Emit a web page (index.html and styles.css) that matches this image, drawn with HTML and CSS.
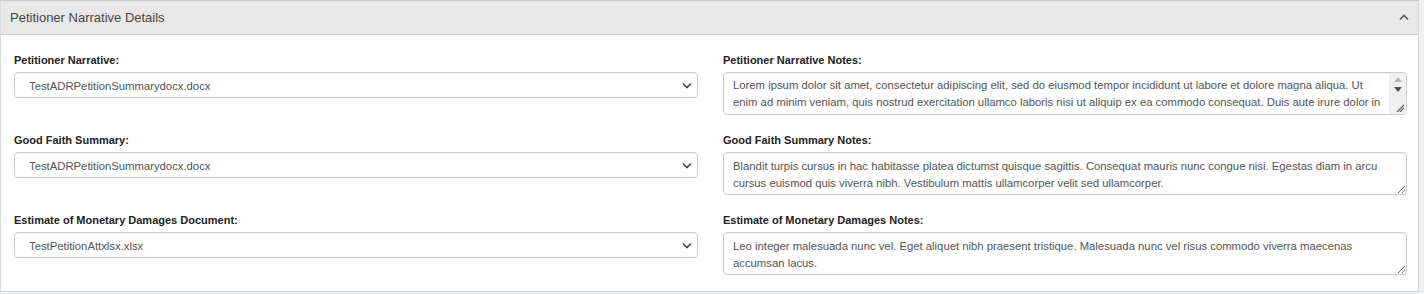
FILE: index.html
```html
<!DOCTYPE html>
<html lang="en">
<head>
  <meta charset="UTF-8">
  <meta name="viewport" content="width=device-width, initial-scale=1.0">
  <title>Petitioner Narrative Details</title>
  <link rel="stylesheet" href="styles.css">
</head>
<body>
  <div class="panel">
    <!-- Cabeçalho do painel -->
    <div class="panel-heading">
      <span class="panel-title">Petitioner Narrative Details</span>
      <svg class="collapse-icon" width="10" height="7" viewBox="0 0 10 7">
        <path d="M1 5.5 L5 1.5 L9 5.5" fill="none" stroke="#555" stroke-width="1.6"/>
      </svg>
    </div>

    <div class="panel-body">
      <div class="field">
        <label for="narrative">Petitioner Narrative:</label>
        <select id="narrative" class="form-control">
          <option>TestADRPetitionSummarydocx.docx</option>
        </select>
      </div>
      <div class="field">
        <label for="narrativeNotes">Petitioner Narrative Notes:</label>
        <div class="scroll-wrap">
          <textarea id="narrativeNotes" class="form-control scroll">Lorem ipsum dolor sit amet, consectetur adipiscing elit, sed do eiusmod tempor incididunt ut labore et dolore magna aliqua. Ut enim ad minim veniam, quis nostrud exercitation ullamco laboris nisi ut aliquip ex ea commodo consequat. Duis aute irure dolor in reprehenderit in voluptate velit esse cillum dolore eu fugiat nulla pariatur. Excepteur sint occaecat cupidatat non proident, sunt in culpa qui officia deserunt mollit anim id est laborum.</textarea>
          <!-- Barra de rolagem desenhada -->
          <div class="fake-scrollbar">
            <svg width="8" height="5" viewBox="0 0 8 5"><path d="M0 5 L4 0 L8 5 Z" fill="#b5b5b5"/></svg>
            <svg width="8" height="5" viewBox="0 0 8 5"><path d="M0 0 L8 0 L4 5 Z" fill="#505050"/></svg>
            <svg class="grip" width="8" height="8" viewBox="0 0 8 8"><path d="M1 8 L8 1 M4 8 L8 4" stroke="#555" stroke-width="1.2"/></svg>
          </div>
        </div>
      </div>

      <div class="field">
        <label for="goodFaith">Good Faith Summary:</label>
        <select id="goodFaith" class="form-control">
          <option>TestADRPetitionSummarydocx.docx</option>
        </select>
      </div>
      <div class="field">
        <label for="goodFaithNotes">Good Faith Summary Notes:</label>
        <textarea id="goodFaithNotes" class="form-control">Blandit turpis cursus in hac habitasse platea dictumst quisque sagittis. Consequat mauris nunc congue nisi. Egestas diam in arcu cursus euismod quis viverra nibh. Vestibulum mattis ullamcorper velit sed ullamcorper.</textarea>
      </div>

      <div class="field">
        <label for="damages">Estimate of Monetary Damages Document:</label>
        <select id="damages" class="form-control">
          <option>TestPetitionAttxlsx.xlsx</option>
        </select>
      </div>
      <div class="field">
        <label for="damagesNotes">Estimate of Monetary Damages Notes:</label>
        <textarea id="damagesNotes" class="form-control">Leo integer malesuada nunc vel. Eget aliquet nibh praesent tristique. Malesuada nunc vel risus commodo viverra maecenas accumsan lacus.</textarea>
      </div>
    </div>
  </div>
</body>
</html>
```

FILE: styles.css
```css
* {
  box-sizing: border-box;
  margin: 0;
  padding: 0;
  font-family: "Liberation Sans", Arial, sans-serif;
}

body {
  background-color: #eef1f4;
  color: #333;
  height: 294px;
}

/* Painel */
.panel {
  width: 1419px;
  background-color: #fff;
  border: 1px solid #d9d9d9;
  border-top-color: #c8c8c8;
}

.panel-heading {
  height: 34px;
  background-color: #e8e8e8;
  border-bottom: 1px solid #d4d4d4;
  padding: 0 10px 0 9px;
  display: flex;
  align-items: center;
  justify-content: space-between;
}

.panel-title {
  font-size: 13px;
  color: #454545;
}

.collapse-icon {
  margin-right: -1px;
}

.panel-body {
  display: grid;
  grid-template-columns: 684px 684px;
  column-gap: 25px;
  row-gap: 17px;
  align-items: start;
  padding: 17px 10px 16px 13px;
}

.field label {
  display: block;
  font-size: 11px;
  font-weight: bold;
  color: #222;
  line-height: 16px;
  margin-bottom: 4px;
}

/* Campos */
.form-control {
  display: block;
  width: 100%;
  font-size: 11.3px;
  color: #555;
  background-color: #fff;
  border: 1px solid #ccc;
  border-radius: 4px;
  box-shadow: inset 0 1px 1px rgba(0, 0, 0, 0.05);
}

select.form-control {
  height: 26px;
  padding: 1px 30px 0 14px;
  appearance: none;
  -webkit-appearance: none;
  background-image: url("data:image/svg+xml,%3Csvg xmlns='http://www.w3.org/2000/svg' width='10' height='7' viewBox='0 0 10 7'%3E%3Cpath d='M1 1.5 L5 5.5 L9 1.5' fill='none' stroke='%23444' stroke-width='1.6'/%3E%3C/svg%3E");
  background-repeat: no-repeat;
  background-position: right 5px center;
}

textarea.form-control {
  height: 43px;
  padding: 5px 9px;
  line-height: 17px;
  resize: vertical;
}

/* Campo com barra de rolagem */
.scroll-wrap {
  position: relative;
}

textarea.scroll {
  overflow-y: hidden;
  padding: 4px 22px 0 9px;
}

.fake-scrollbar {
  position: absolute;
  top: 1px;
  right: 1px;
  bottom: 1px;
  width: 17px;
  background-color: #f0f0f0;
  border-radius: 0 3px 3px 0;
  display: flex;
  flex-direction: column;
  align-items: center;
  gap: 5px;
  padding-top: 4px;
}

.fake-scrollbar .grip {
  margin-top: auto;
  margin-bottom: 2px;
  align-self: flex-end;
  margin-right: 2px;
}
```
